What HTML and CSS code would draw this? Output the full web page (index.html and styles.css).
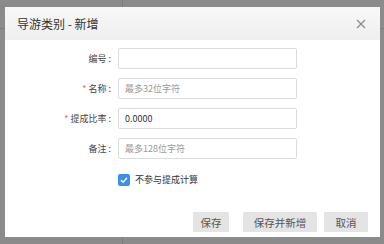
FILE: index.html
```html
<!DOCTYPE html>
<html lang="zh-CN">
<head>
    <meta charset="UTF-8">
    <title>导游类别 - 新增</title>
    <link rel="stylesheet" href="styles.css">
</head>
<body>
    <div class="dialog">
        <div class="dialog-header">
            <span class="dialog-title">导游类别 - 新增</span>
            <svg class="close" width="10" height="10" viewBox="0 0 10 10">
                <path d="M1 1L9 9M9 1L1 9" stroke="#8a8a8a" stroke-width="1.2" fill="none"/>
            </svg>
        </div>
        <div class="dialog-body">
            <div class="form">
                <label class="label">编号<span class="colon">:</span></label>
                <input class="input" type="text">

                <label class="label"><span class="req">*</span>名称<span class="colon">:</span></label>
                <input class="input" type="text" placeholder="最多32位字符">

                <label class="label"><span class="req">*</span>提成比率<span class="colon">:</span></label>
                <input class="input" type="text" value="0.0000">

                <label class="label">备注<span class="colon">:</span></label>
                <input class="input" type="text" placeholder="最多128位字符">

                <span></span>
                <label class="check">
                    <span class="check-box">
                        <svg width="8" height="8" viewBox="0 0 8 8">
                            <path d="M1 4.2L3.1 6.2L7 1.8" stroke="#fff" stroke-width="1.3" fill="none"/>
                        </svg>
                    </span>
                    不参与提成计算
                </label>
            </div>
        </div>
        <div class="dialog-footer">
            <button class="btn btn-save">保存</button>
            <button class="btn btn-new">保存并新增</button>
            <button class="btn btn-cancel">取消</button>
        </div>
    </div>
</body>
</html>
```

FILE: styles.css
```css
body {
    margin: 0;
    width: 384px;
    height: 244px;
    overflow: hidden;
    font-family: "Noto Sans CJK SC", "Noto Sans", sans-serif;
    background-color: #8b8b8b;
    background-image:
        linear-gradient(to right, transparent 122px, #7c7c7c 122px, #7c7c7c 123px, transparent 123px),
        linear-gradient(to bottom, transparent 28px, #7c7c7c 28px, #7c7c7c 29px, transparent 29px);
    padding: 7px 0 0 5px;
    box-sizing: border-box;
}

.dialog {
    width: 375px;
    height: 230px;
    background: #fff;
    display: flex;
    flex-direction: column;
}

.dialog-header {
    height: 33px;
    display: flex;
    align-items: center;
    justify-content: space-between;
    padding: 0 14px 0 12px;
    background: linear-gradient(#f8f8f8, #efefef);
}

.dialog-title {
    font-size: 12px;
    color: #333;
}

.dialog-body {
    flex: 1;
    padding-top: 8px;
}

.form {
    display: grid;
    grid-template-columns: 106px 179px;
    column-gap: 7px;
    row-gap: 9px;
    align-items: center;
}

.label {
    text-align: right;
    font-size: 9px;
    color: #444;
}

.colon {
    margin-left: 2px;
}

.req {
    color: #f06060;
    margin-right: 2px;
}

.input {
    height: 21px;
    box-sizing: border-box;
    border: 1px solid #dcdcdc;
    border-radius: 2px;
    padding: 0 6px;
    font-family: inherit;
    font-size: 9px;
    color: #333;
    outline: none;
}

.input::placeholder {
    color: #999;
}

.check {
    display: flex;
    align-items: center;
    gap: 5px;
    font-size: 9px;
    color: #333;
    margin-top: 5px;
}

.check-box {
    width: 12px;
    height: 12px;
    border-radius: 2px;
    background: #3b91ea;
    display: flex;
    align-items: center;
    justify-content: center;
}

.dialog-footer {
    display: flex;
    justify-content: flex-end;
    padding: 0 12px 5px 0;
}

.btn {
    height: 20px;
    border: none;
    border-radius: 1px;
    background: #e4e4e4;
    color: #555;
    font-family: inherit;
    font-size: 10.5px;
    padding: 0;
}

.btn-save {
    width: 36px;
}

.btn-new {
    width: 74px;
    margin-left: 14px;
}

.btn-cancel {
    width: 44px;
    margin-left: 7px;
}
```
